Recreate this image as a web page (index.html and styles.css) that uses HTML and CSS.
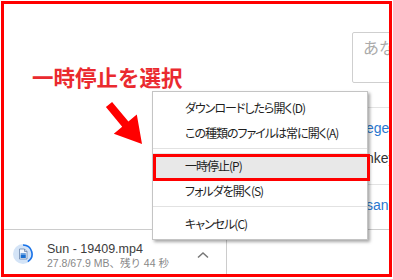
FILE: index.html
```html
<!DOCTYPE html>
<html lang="ja">
<head>
    <meta charset="UTF-8">
    <meta name="viewport" content="width=device-width, initial-scale=1.0">
    <title>一時停止を選択</title>
    <link rel="stylesheet" href="styles.css">
</head>
<body>
    <div class="frame">
        <div class="page">
            <section class="content">
                <div class="main">
                    <h1 class="note">一時停止を選択</h1>
                </div>
                <aside class="side">
                    <div class="search">あなたの質問</div>
                    <div class="rule"></div>
                    <ul class="links">
                        <li class="link">egestas</li>
                        <li class="plain">nkey</li>
                    </ul>
                    <div class="rule rule-low"></div>
                    <ul class="links">
                        <li class="link">san-ei</li>
                    </ul>
                </aside>
            </section>

            <!-- download shelf -->
            <section class="shelf">
                <div class="dl-item">
                    <svg class="dl-icon" width="20" height="20" viewBox="0 0 20 20">
                        <circle cx="10" cy="10" r="10" fill="#d4e4f7"/>
                        <path d="M10 1 A9 9 0 0 1 14.8 17.6" fill="none" stroke="#1a73e8" stroke-width="1.6"/>
                        <path d="M6.5 5 H11.5 L14 7.5 V15 H6.5 Z" fill="#f4f8fd" stroke="#6b87ad" stroke-width="0.8"/>
                        <path d="M11.5 5 V7.5 H14" fill="none" stroke="#6b87ad" stroke-width="0.8"/>
                        <rect x="7.6" y="10.4" width="5.2" height="3.6" fill="#1a6fd0"/>
                        <rect x="7.6" y="9.4" width="5.2" height="0.7" fill="#1a6fd0"/>
                    </svg>
                    <div class="dl-text">
                        <div class="dl-name">Sun - 19409.mp4</div>
                        <div class="dl-status">27.8/67.9 MB、残り 44 秒</div>
                    </div>
                    <svg class="dl-more" width="12" height="8" viewBox="0 0 12 8">
                        <polyline points="1,6.5 6,2 11,6.5" fill="none" stroke="#777" stroke-width="1.5"/>
                    </svg>
                </div>
            </section>
        </div>

        <svg class="arrow" viewBox="4 4 385 270">
            <polygon points="105.9,107.1 112.1,101.9 128.4,121.5 136.8,114.5 142,144 113.8,133.7 122.2,126.7" fill="#ff0000"/>
        </svg>

        <ul class="menu">
            <li>ダウンロードしたら開く(D)</li>
            <li>この種類のファイルは常に開く(A)</li>
            <li class="sep"></li>
            <li class="active">一時停止(P)</li>
            <li>フォルダを開く(S)</li>
            <li class="sep"></li>
            <li>キャンセル(C)</li>
        </ul>

        <div class="mark"></div>
    </div>
</body>
</html>
```

FILE: styles.css
```css
* {
    margin: 0;
    padding: 0;
    box-sizing: border-box;
}

body {
    background-color: #fff;
    font-family: "Liberation Sans", "Noto Sans CJK JP", sans-serif;
}

.frame {
    position: relative;
    width: 391px;
    height: 276px;
    margin: 1px 0 0 1px;
    border: 3px solid #ff0000;
    overflow: hidden;
}

.page {
    display: flex;
    flex-direction: column;
    height: 100%;
}

.content {
    display: grid;
    grid-template-columns: 348px 200px;
    height: 225px;
}

.note {
    margin-top: 62px;
    padding-left: 28px;
    font-family: "Noto Sans CJK JP", sans-serif;
    font-size: 21.5px;
    line-height: 22px;
    font-weight: bold;
    color: #ea2a2f;
}

.side {
    padding-top: 28px;
}

.search {
    height: 51px;
    padding: 4px 10px;
    border: 1px solid #cfcfcf;
    border-radius: 2px;
    font-family: "Noto Sans CJK JP", sans-serif;
    font-size: 16px;
    line-height: 20px;
    color: #aaa;
}

.rule {
    height: 1px;
    margin-top: 24px;
    background-color: #e3e3e3;
}

.rule-low {
    margin-top: 16px;
}

.links {
    list-style: none;
    padding: 10px 0 0 14px;
    font-size: 14px;
    line-height: 20px;

    li + li {
        margin-top: 10px;
    }

    .link {
        color: #2a78cf;
    }

    .plain {
        color: #333;
    }
}

.shelf {
    height: 45px;
    border-top: 1px solid #cccccc;
}

.dl-item {
    display: flex;
    align-items: flex-start;
    width: 223px;
    height: 100%;
    padding: 12px 0 0 9px;
    border-right: 1px solid #cccccc;
}

.dl-icon {
    flex-shrink: 0;
    margin-top: 2px;
}

.dl-text {
    margin-left: 14px;
}

.dl-name {
    font-size: 12.5px;
    line-height: 15px;
    color: #3c3c3c;
}

.dl-status {
    font-size: 10.5px;
    line-height: 13px;
    color: #888;
}

.dl-more {
    margin: 9px 17px 0 auto;
}

.arrow {
    position: absolute;
    left: 0;
    top: 0;
    width: 385px;
    height: 270px;
}

.menu {
    position: absolute;
    left: 148px;
    top: 87px;
    width: 216px;
    padding: 3px 0;
    list-style: none;
    background-color: #fff;
    border: 1px solid #c4c4c4;
    box-shadow: 2px 2px 3px rgba(0, 0, 0, 0.35);
    font-family: "Noto Sans CJK JP", sans-serif;
    font-size: 12px;
    font-feature-settings: "palt";
    letter-spacing: -1px;
    color: #1e1e1e;

    li {
        height: 25px;
        line-height: 25px;
        padding-left: 32px;
        white-space: nowrap;
    }

    .sep {
        height: 1px;
        margin: 3px 0 4px;
        padding: 0;
        background-color: #e2e2e2;
    }

    .active {
        background-color: #e8e8e8;
    }
}

.mark {
    position: absolute;
    left: 149px;
    top: 150px;
    width: 217px;
    height: 27px;
    border: 3px solid #ff0000;
}
```
